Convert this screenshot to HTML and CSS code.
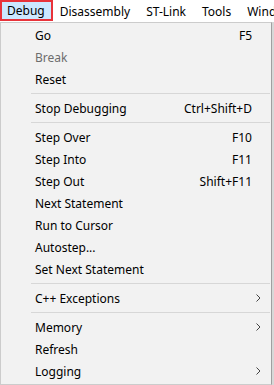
FILE: index.html
```html
<!DOCTYPE html>
<html>
<head>
    <title>Debug Menu</title>
    <link rel="stylesheet" href="styles.css">
</head>
<body>
    <div class="menubar">
        <span class="menu-title active">Debug</span>
        <span class="menu-title">Disassembly</span>
        <span class="menu-title">ST-Link</span>
        <span class="menu-title">Tools</span>
        <span class="menu-title">Window</span>
    </div>

    <div class="dropdown">
        <div class="item"><span class="label">Go</span><span class="key">F5</span></div>
        <div class="item disabled"><span class="label">Break</span></div>
        <div class="item"><span class="label">Reset</span></div>
        <div class="sep"></div>
        <div class="item"><span class="label">Stop Debugging</span><span class="key">Ctrl+Shift+D</span></div>
        <div class="sep"></div>
        <div class="item"><span class="label">Step Over</span><span class="key">F10</span></div>
        <div class="item"><span class="label">Step Into</span><span class="key">F11</span></div>
        <div class="item"><span class="label">Step Out</span><span class="key">Shift+F11</span></div>
        <div class="item"><span class="label">Next Statement</span></div>
        <div class="item"><span class="label">Run to Cursor</span></div>
        <div class="item"><span class="label">Autostep...</span></div>
        <div class="item"><span class="label">Set Next Statement</span></div>
        <div class="sep"></div>
        <div class="item sub"><span class="label">C++ Exceptions</span>
            <svg class="arrow" width="5" height="8" viewBox="0 0 5 8"><path d="M0.5 0.5 L4 4 L0.5 7.5" fill="none" stroke="#444" stroke-width="1"/></svg>
        </div>
        <div class="sep"></div>
        <div class="item sub"><span class="label">Memory</span>
            <svg class="arrow" width="5" height="8" viewBox="0 0 5 8"><path d="M0.5 0.5 L4 4 L0.5 7.5" fill="none" stroke="#444" stroke-width="1"/></svg>
        </div>
        <div class="item"><span class="label">Refresh</span></div>
        <div class="item sub"><span class="label">Logging</span>
            <svg class="arrow" width="5" height="8" viewBox="0 0 5 8"><path d="M0.5 0.5 L4 4 L0.5 7.5" fill="none" stroke="#444" stroke-width="1"/></svg>
        </div>
    </div>
</body>
</html>
```

FILE: styles.css
```css
body {
    margin: 0;
    font-family: "Noto Sans", "Open Sans", sans-serif;
    font-size: 12px;
    color: #000;
    background: #fff;
    width: 274px;
    height: 385px;
    overflow: hidden;
}

.menubar {
    display: flex;
    height: 22px;
    background: #fff;
    white-space: nowrap;
    overflow: hidden;
}

.menu-title {
    display: flex;
    align-items: center;
    padding: 0 7px;
    margin-right: 2px;
}

.menu-title.active {
    background: #cce8ff;
    border: 2px solid #e8333a;
    padding: 0 6px 0 5px;
    height: 17px;
    margin-right: 0;
}

.dropdown {
    width: 270px;
    background: #f2f2f2;
    border: 1px solid #cccccc;
    border-right-color: #a0a0a0;
    padding: 1px 0 2px;
    box-shadow: 2px 0 0 #d8d8d8;
}

.item {
    display: flex;
    align-items: center;
    height: 22px;
    padding: 0 19px 0 34px;
}

.item .label {
    flex: 1;
}

.item.disabled {
    color: #6d6d6d;
}

.item.sub {
    padding-right: 10px;
}

.arrow {
    display: block;
}

.sep {
    height: 1px;
    background: #d7d7d7;
    margin: 3px 1px 3px 30px;
}
```
